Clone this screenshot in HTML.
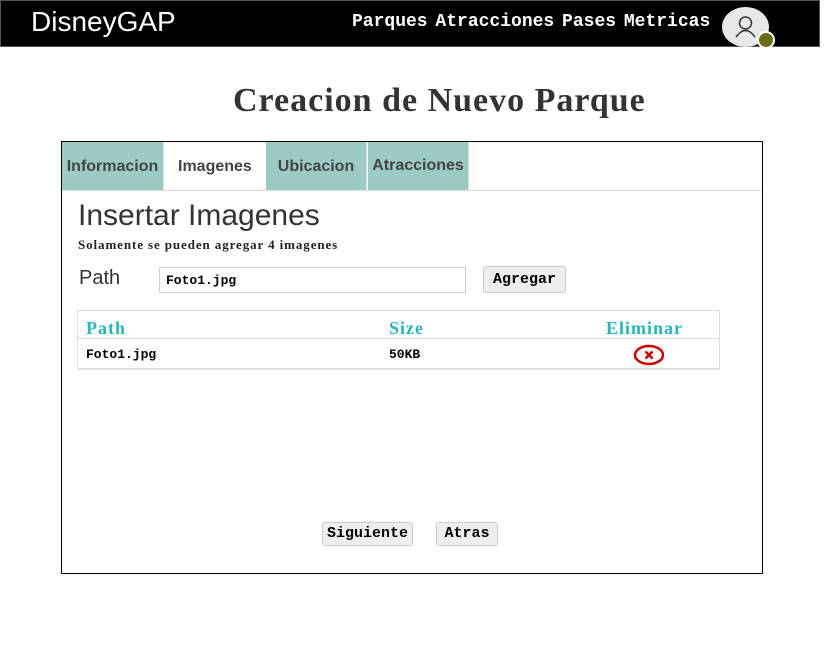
<!DOCTYPE html><html><head><style>
*{margin:0;padding:0;box-sizing:border-box}
body{width:827px;height:660px;background:#fff;position:relative;font-family:"Liberation Serif",serif;overflow:hidden}
.abs{position:absolute}
.nav{left:0;top:0;width:820px;height:47px;background:#000;border:1px solid #555}
.logo{left:31px;top:6px;font:28px "Liberation Sans",sans-serif;color:#fff}
.links{left:352px;top:12px;color:#fff;font:bold 18px "Liberation Mono",monospace;letter-spacing:0;word-spacing:-3px;white-space:nowrap}
.av{left:722px;top:7px;width:47px;height:40px;border-radius:50%;background:#e8e8e8}
.dot{left:757px;top:31px;width:18px;height:18px;border-radius:50%;background:#6b6b16;border:2px solid #fff}
h1{position:absolute;left:233px;top:82px;font:bold 34px "Liberation Serif",serif;color:#333;letter-spacing:1px;white-space:nowrap}
.box{left:61px;top:141px;width:702px;height:433px;border:1px solid #000}
.tab{top:142px;height:48px;background:#9ccbc5;font:bold 16px "Liberation Sans",sans-serif;color:#444;padding-top:16px;text-align:center;border-right:1px solid #ddd}
.line{left:62px;top:190px;width:700px;height:1px;background:#ddd}
.btn{background:#eee;border:1px solid #ccc;border-radius:3px;font:bold 15px "Liberation Mono",monospace;color:#000;text-align:center}
.th{color:#26b5b9;font:bold 18px "Liberation Serif",serif;letter-spacing:1px}
.td{font:bold 13px "Liberation Mono",monospace;color:#000}
</style></head><body>
<div class="abs nav"></div>
<div class="abs logo">DisneyGAP</div>
<div class="abs links">Parques Atracciones Pases Metricas</div>
<div class="abs av"><svg width="47" height="40" viewBox="0 0 47 40"><circle cx="23.5" cy="16" r="6" fill="none" stroke="#333" stroke-width="1.5"/><path d="M14 30 Q23.5 17 33 30" fill="none" stroke="#333" stroke-width="1.5"/></svg></div>
<div class="abs dot"></div>
<h1>Creacion de Nuevo Parque</h1>
<div class="abs box"></div>
<div class="abs tab" style="left:62px;width:102px">Informacion</div>
<div class="abs" style="left:178px;top:158px;font:bold 16px 'Liberation Sans',sans-serif;color:#444">Imagenes</div>
<div class="abs tab" style="left:266px;width:101px">Ubicacion</div>
<div class="abs tab" style="left:368px;width:101px;padding-top:15px">Atracciones</div>
<div class="abs line"></div>
<div class="abs" style="left:78px;top:199px;font:30px 'Liberation Sans',sans-serif;color:#333">Insertar Imagenes</div>
<div class="abs" style="left:78px;top:237px;font:bold 13px 'Liberation Serif',serif;color:#222;letter-spacing:0.9px;white-space:nowrap">Solamente se pueden agregar 4 imagenes</div>
<div class="abs" style="left:79px;top:267px;font:20px 'Liberation Sans',sans-serif;color:#333">Path</div>
<div class="abs" style="left:159px;top:267px;width:307px;height:26px;border:1px solid #ccc;padding:5px 6px;font:bold 13px 'Liberation Mono',monospace">Foto1.jpg</div>
<div class="abs btn" style="left:483px;top:266px;width:83px;height:27px;padding-top:4px">Agregar</div>
<div class="abs" style="left:77px;top:310px;width:643px;height:60px;border:1px solid #ddd;border-bottom:2px solid #ddd"></div>
<div class="abs" style="left:78px;top:338px;width:641px;height:1px;background:#ddd"></div>
<div class="abs th" style="left:86px;top:318px">Path</div>
<div class="abs th" style="left:389px;top:318px">Size</div>
<div class="abs th" style="left:606px;top:318px">Eliminar</div>
<div class="abs td" style="left:86px;top:347px">Foto1.jpg</div>
<div class="abs td" style="left:389px;top:347px">50KB</div>
<svg class="abs" style="left:633px;top:344px" width="32" height="22"><ellipse cx="16" cy="11" rx="14" ry="9" fill="none" stroke="#c00" stroke-width="2.5"/><path d="M12.5 7.5L19.5 14.5M19.5 7.5L12.5 14.5" stroke="#c00" stroke-width="2.5"/></svg>
<div class="abs btn" style="left:322px;top:522px;width:91px;height:24px;padding-top:2px">Siguiente</div>
<div class="abs btn" style="left:436px;top:522px;width:62px;height:24px;padding-top:2px">Atras</div>
</body></html>
